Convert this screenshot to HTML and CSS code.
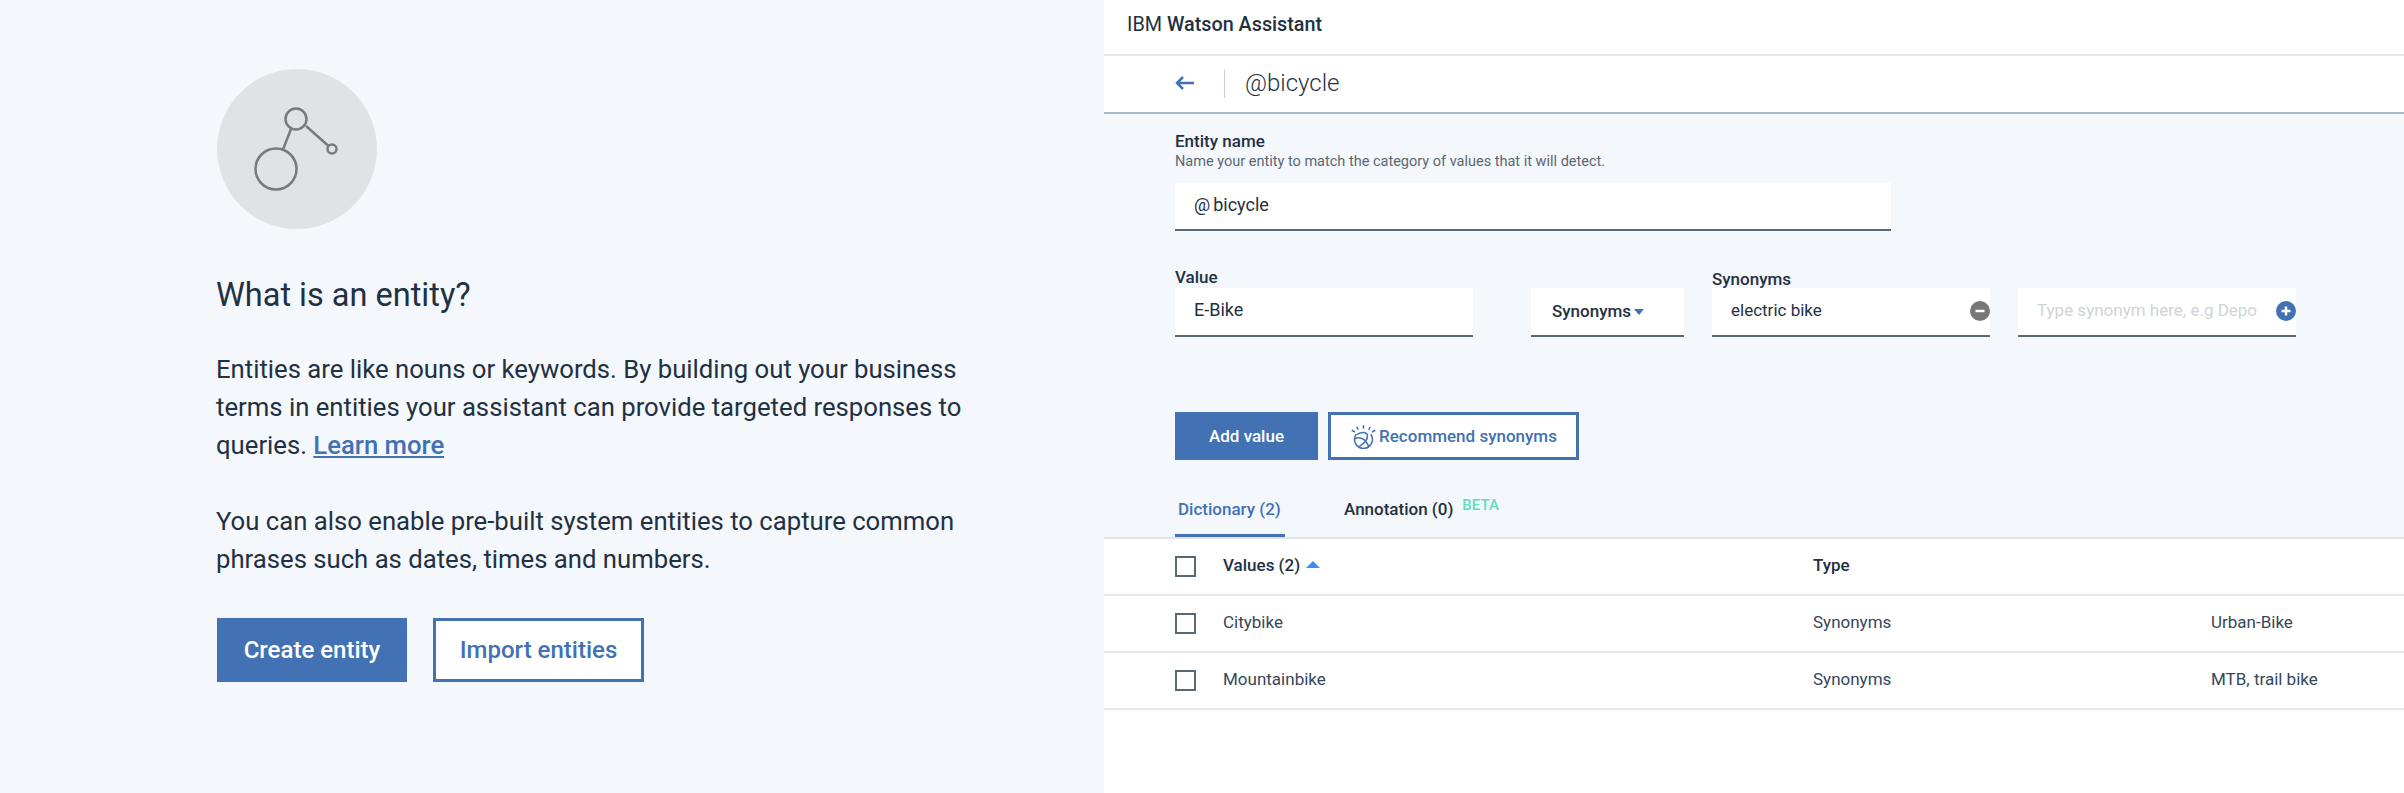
FILE: index.html
```html
<!DOCTYPE html>
<html lang="en">
<head>
<meta charset="utf-8">
<title>IBM Watson Assistant</title>
<link rel="stylesheet" href="styles.css">
</head>
<body>
<main class="page">
  <section class="intro">
    <div class="intro-badge">
      <svg class="intro-icon" viewBox="0 0 160 160" width="160" height="160" aria-hidden="true">
        <circle cx="79" cy="50" r="10.5"/>
        <circle cx="59" cy="100" r="20.5"/>
        <circle cx="115" cy="80" r="4.5"/>
        <path d="M74 60 L66 80.5 M89 57 L111.500 77"/>
      </svg>
    </div>
    <h1 class="intro-title">What is an entity?</h1>
    <p class="intro-text">Entities are like nouns or keywords. By building out your business terms in entities your assistant can provide targeted responses to queries. <a class="intro-link" href="#">Learn more</a></p>
    <p class="intro-text intro-text-second">You can also enable pre-built system entities to capture common phrases such as dates, times and numbers.</p>
    <div class="intro-actions">
      <button class="btn btn-solid btn-large btn-create">Create entity</button>
      <button class="btn btn-outline btn-large btn-import">Import entities</button>
    </div>
  </section>

  <section class="app">
    <header class="app-header"><span class="brand-light">IBM</span> <strong class="brand-bold">Watson Assistant</strong></header>
    <div class="subheader">
      <svg class="back-icon" viewBox="0 0 20 16" width="20" height="16" aria-hidden="true"><path d="M19 8H2M8 2 2 8l6 6"/></svg>
      <span class="subheader-rule"></span>
      <span class="subheader-title">@bicycle</span>
    </div>
    <div class="editor">
      <div class="field-label">Entity name</div>
      <div class="field-help">Name your entity to match the category of values that it will detect.</div>
      <div class="input input-name">@<span class="input-gap">bicycle</span></div>

      <div class="value-row">
        <div class="col col-value">
          <div class="field-label">Value</div>
          <div class="input">E-Bike</div>
        </div>
        <div class="col col-select">
          <div class="input input-select">Synonyms<span class="caret"></span></div>
        </div>
        <div class="col col-syn">
          <div class="field-label field-label-low">Synonyms</div>
          <div class="input input-syn">electric bike
            <svg class="round-icon" viewBox="0 0 20 20" width="20" height="20" aria-hidden="true"><circle class="round-grey" cx="10" cy="10" r="10"/><path d="M5.500 10h9"/></svg>
          </div>
        </div>
        <div class="col col-syn">
          <div class="input input-syn input-placeholder">Type synonym here, e.g Depo
            <svg class="round-icon" viewBox="0 0 20 20" width="20" height="20" aria-hidden="true"><circle class="round-blue" cx="10" cy="10" r="10"/><path d="M5.500 10h9M10 5.500v9"/></svg>
          </div>
        </div>
      </div>

      <div class="editor-actions">
        <button class="btn btn-solid btn-small btn-add">Add value</button>
        <button class="btn btn-outline btn-small btn-recommend">
          <svg class="watson-icon" viewBox="0 0 24 22" width="27" height="25" aria-hidden="true">
            <path d="M12 1v3M6 2.500 7.300 5M18 2.500 16.700 5M1.500 5.500l3 1.500M22.500 5.500l-3 1.500"/>
            <path d="M5.500 9a8 8 0 1 0 13 0"/>
            <path d="M6 9.500C9 6.500 15 7 15.500 10c.5 4-3.500 8-7.500 10M4.500 13c3-2 9-1 12 6.500"/>
          </svg>
          Recommend synonyms
        </button>
      </div>

      <nav class="tabs">
        <a class="tab tab-active" href="#">Dictionary (2)</a>
        <a class="tab tab-plain" href="#">Annotation (0)</a>
        <sup class="tab-beta">BETA</sup>
      </nav>
    </div>

    <div class="table">
      <div class="row row-head">
        <span class="check"></span>
        <span class="cell">Values (2)<span class="sort"></span></span>
        <span class="cell">Type</span>
        <span class="cell"></span>
      </div>
      <div class="row">
        <span class="check"></span>
        <span class="cell">Citybike</span>
        <span class="cell">Synonyms</span>
        <span class="cell">Urban-Bike</span>
      </div>
      <div class="row">
        <span class="check"></span>
        <span class="cell">Mountainbike</span>
        <span class="cell">Synonyms</span>
        <span class="cell">MTB, trail bike</span>
      </div>
    </div>
  </section>
</main>
</body>
</html>
```
FILE: styles.css
```css
* { box-sizing: border-box; }
html, body { margin: 0; height: 100%; background: #fff; }
body { font-family: "Roboto", "Noto Sans", "Liberation Sans", sans-serif; color: #1f3142; overflow: hidden; }
.page { display: flex; height: 793px; }

/* Left intro panel */
.intro { width: 1104px; flex: none; background: #f4f7fb; padding: 69px 0 0 216px; }
.intro-badge { width: 160px; height: 160px; border-radius: 50%; background: #dfe3e6; margin-left: 1px; }
.intro-icon { display: block; fill: none; stroke: #7a7a7a; stroke-width: 2.5; }
.intro-title { margin: 44px 0 0; font-size: 32.500px; line-height: 44px; font-weight: 400; color: #1f3142; }
.intro-text { margin: 33px 0 0; width: 790px; font-size: 25.700px; line-height: 38px; color: #1f3142; }
.intro-text-second { margin-top: 38px; }
.intro-link { color: #4271b4; font-weight: 500; }
.intro-actions { display: flex; gap: 26px; margin: 40px 0 0 1px; }

/* Buttons */
.btn { display: flex; align-items: center; justify-content: center; font-family: inherit; font-weight: 500; border: 3px solid #4271b4; border-radius: 0; padding: 0; }
.btn-solid { background: #4271b4; color: #fff; }
.btn-outline { background: #fff; color: #4271b4; }
.btn-large { height: 64px; font-size: 24px; }
.btn-create { width: 190px; }
.btn-import { width: 211px; }
.btn-small { height: 48px; font-size: 17px; }
.btn-add { width: 143px; }
.btn-recommend { width: 251px; gap: 2px; }
.watson-icon { fill: none; stroke: #4271b4; stroke-width: 1.4; }

/* Right app */
.app { flex: 1; min-width: 0; display: flex; flex-direction: column; background: #fff; }
.app-header { height: 56px; padding: 11px 0 0 23px; border-bottom: 2px solid #e4e8ec; font-size: 19.800px; line-height: 28px; }
.brand-light { font-weight: 400; }
.brand-bold { font-weight: 500; }
.subheader { display: flex; align-items: center; height: 58px; padding: 0 0 2px 71px; border-bottom: 2px solid #aab7c6; }
.back-icon { fill: none; stroke: #4271b4; stroke-width: 2.500; }
.subheader-rule { width: 1px; height: 29px; background: #c7ced5; margin: 0 20px 0 29px; }
.subheader-title { font-size: 24px; font-weight: 300; color: #1f3142; }

.editor { background: #f4f7fb; padding: 16px 0 0 71px; height: 423px; flex: none; }
.field-label { font-size: 17px; line-height: 22px; font-weight: 500; color: #1f3142; }
.field-label-low { position: relative; top: 2px; }
.field-help { font-size: 14.500px; line-height: 20px; color: #5a6872; margin-top: 0; }
.input { position: relative; height: 49px; padding: 8px 0 0 19px; background: #fff; border-bottom: 2px solid #5a6872; font-size: 18px; line-height: 28px; color: #1f3142; }
.input-name { width: 716px; height: 48px; margin-top: 11px; }
.input-gap { margin-left: 3px; }
.value-row { display: flex; align-items: flex-end; gap: 28px; margin-top: 35px; }
.col-value { width: 298px; margin-right: 30px; }
.col-select { width: 153px; }
.col-syn { width: 278px; }
.input-syn { padding-left: 19px; overflow: hidden; white-space: nowrap; font-size: 17px; }
.input-select { padding: 9px 0 0 21px; font-weight: 500; font-size: 17px; }
.caret { display: inline-block; margin-left: 3px; vertical-align: 2px; border: 5px solid transparent; border-top: 6px solid #4271b4; border-bottom: 0; }
.input-placeholder { color: #d0d4d8; }
.round-icon { position: absolute; right: 0; top: 13px; }
.round-grey { fill: #777; }
.round-blue { fill: #4271b4; }
.round-icon path { fill: none; stroke: #fff; stroke-width: 2.500; }
.editor-actions { display: flex; gap: 10px; margin-top: 75px; }
.tabs { display: flex; align-items: flex-start; margin-top: 34px; height: 43px; }
.tab { display: block; height: 43px; padding: 4px 3px 0; font-size: 17px; line-height: 22px; text-decoration: none; font-weight: 500; }
.tab-active { width: 110px; color: #4271b4; border-bottom: 3px solid #4271b4; white-space: nowrap; }
.tab-plain { margin-left: 56px; color: #1f3142; white-space: nowrap; }
.tab-beta { margin: 2px 0 0 6px; font-size: 15px; line-height: 18px; color: #5fdcc0; font-weight: 500; }

.table { border-top: 2px solid #dfe3e6; }
.row { display: grid; grid-template-columns: 48px 590px 398px 1fr; align-items: center; height: 57px; padding-left: 71px; border-bottom: 2px solid #e6e9ec; font-size: 17px; color: #35475a; }
.row-head { font-weight: 500; color: #1f3142; }
.cell { padding-bottom: 3px; }
.check { display: block; width: 21px; height: 21px; border: 2px solid #5a6872; background: #fff; }
.sort { display: inline-block; margin-left: 6px; vertical-align: 3px; border: 7px solid transparent; border-bottom: 7px solid #3d8df0; border-top: 0; }
```
